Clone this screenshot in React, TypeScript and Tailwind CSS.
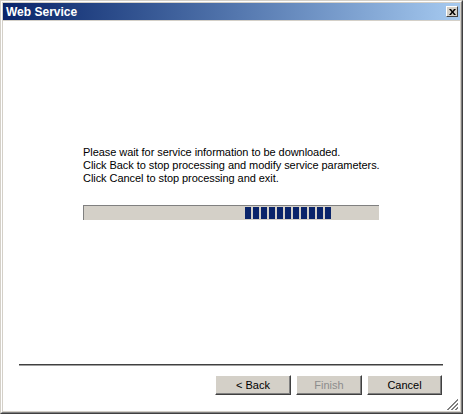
import React from 'react';

const font = { fontFamily: '"Liberation Sans", Arial, sans-serif' };

const WizardButton: React.FC<{ label: string; disabled?: boolean; width: string }> = ({ label, disabled, width }) => (
  <button
    type="button"
    className={`${width} h-[20px] bg-[#d4d0c8] border border-t-white border-l-white border-r-[#404040] border-b-[#404040] shadow-[inset_-1px_-1px_#808080] text-[11px] leading-none flex items-center justify-center ${
      disabled ? 'text-[#8c8c8c]' : 'text-black'
    }`}
  >
    {label}
  </button>
);

const ResizeGrip = () => (
  <svg width="12" height="12" viewBox="0 0 12 12" className="absolute right-[2px] bottom-[1px]">
    {[0, 4, 8].map((o) => (
      <g key={o}>
        <line x1={12} y1={o} x2={o} y2={12} stroke="#ffffff" strokeWidth="1" />
        <line x1={12} y1={o + 1} x2={o + 1} y2={12} stroke="#808080" strokeWidth="1" />
        <line x1={12} y1={o + 2} x2={o + 2} y2={12} stroke="#808080" strokeWidth="1" />
      </g>
    ))}
  </svg>
);

export default function App() {
  const blocks = Array.from({ length: 11 });

  return (
    <div style={font} className="w-[463px] h-[414px] border border-t-[#d4d0c8] border-l-[#d4d0c8] border-r-[#404040] border-b-[#404040]">
      <div className="w-full h-full border border-t-white border-l-white border-r-[#808080] border-b-[#808080] bg-[#d4d0c8] p-[1px] flex flex-col">
        {/* title bar */}
        <div className="h-[17px] shrink-0 bg-gradient-to-r from-[#0a246a] to-[#a6caf0] flex items-center justify-between pl-[3px] pr-[2px]">
          <span className="text-white font-bold text-[12px] leading-none">Web Service</span>
          <div className="w-[12px] h-[11px] bg-[#d4d0c8] border border-t-white border-l-white border-r-[#404040] border-b-[#404040] flex items-center justify-center">
            <svg width="7" height="6" viewBox="0 0 7 6">
              <path d="M0 0h2l1.5 2L5 0h2L4.5 3 7 6H5L3.5 4 2 6H0l2.5-3z" fill="#000" />
            </svg>
          </div>
        </div>

        {/* client area */}
        <div className="mt-[1px] flex-1 bg-white relative flex flex-col">
          <div className="ml-[80px] mt-[125px] text-[11px] leading-[13px] tracking-[-0.06px] text-black">
            <p>Please wait for service information to be downloaded.</p>
            <p>Click Back to stop processing and modify service parameters.</p>
            <p>Click Cancel to stop processing and exit.</p>
          </div>

          <div className="ml-[80px] mt-[20px] w-[296px] h-[15px] bg-[#d4d0c8] border-t border-l border-[#808080] flex items-center pl-[161px] gap-[2px]">
            {blocks.map((_, i) => (
              <div key={i} className="w-[6px] h-[12px] bg-[#0a246a]" />
            ))}
          </div>

          <div className="ml-[16px] mr-[17px] mt-[144px] h-[2px] border-t border-t-[#404040] border-b border-b-[#a0a0a0]" />

          <div className="mt-[9px] mr-[18px] flex justify-end">
            <WizardButton label="< Back" width="w-[76px]" />
            <div className="w-[5px]" />
            <WizardButton label="Finish" disabled width="w-[66px]" />
            <div className="w-[5px]" />
            <WizardButton label="Cancel" width="w-[75px]" />
          </div>

          <ResizeGrip />
        </div>
      </div>
    </div>
  );
}
